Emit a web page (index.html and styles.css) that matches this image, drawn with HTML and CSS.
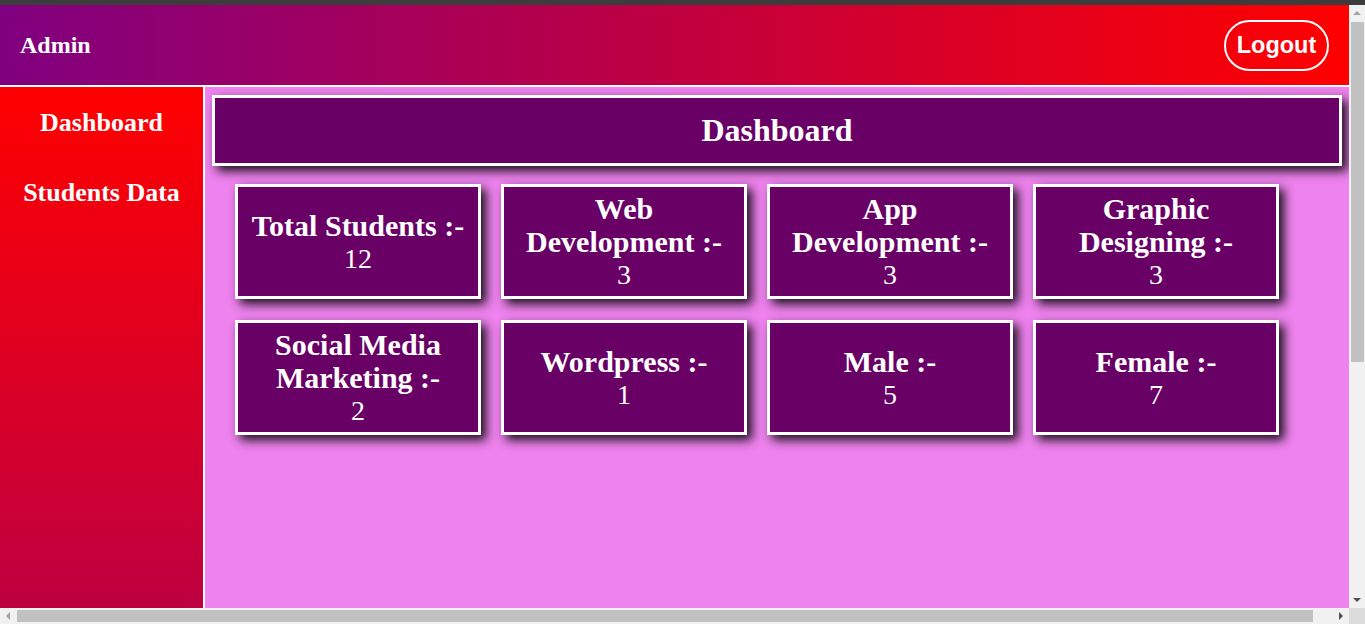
FILE: index.html
```html
<!DOCTYPE html>
<html lang="en">
<head>
<meta charset="utf-8">
<title>Admin Dashboard</title>
<link rel="stylesheet" href="styles.css">
</head>
<body>
<div class="chrome-strip"></div>
<div class="window">
  <div class="page">
    <header class="topbar">
      <h2 class="brand">Admin</h2>
      <button class="logout">Logout</button>
    </header>
    <div class="layout">
      <nav class="sidebar">
        <a class="nav-item" href="#">Dashboard</a>
        <a class="nav-item" href="#">Students Data</a>
      </nav>
      <main class="content">
        <div class="title-box"><h1>Dashboard</h1></div>
        <div class="cards">
          <div class="card"><h2>Total Students :-</h2><p>12</p></div>
          <div class="card"><h2>Web Development :-</h2><p>3</p></div>
          <div class="card"><h2>App Development :-</h2><p>3</p></div>
          <div class="card"><h2>Graphic Designing :-</h2><p>3</p></div>
          <div class="card"><h2>Social Media Marketing :-</h2><p>2</p></div>
          <div class="card"><h2>Wordpress :-</h2><p>1</p></div>
          <div class="card"><h2>Male :-</h2><p>5</p></div>
          <div class="card"><h2>Female :-</h2><p>7</p></div>
        </div>
      </main>
    </div>
  </div>
  <div class="vscroll" aria-hidden="true">
    <div class="sb-btn"><span class="arrow up"></span></div>
    <div class="vtrack"><div class="vthumb"></div></div>
    <div class="sb-btn"><span class="arrow down"></span></div>
  </div>
  <div class="hscroll" aria-hidden="true">
    <div class="sb-btn"><span class="arrow left"></span></div>
    <div class="htrack"><div class="hthumb"></div></div>
    <div class="sb-btn"><span class="arrow right"></span></div>
  </div>
  <div class="corner" aria-hidden="true"></div>
</div>
</body>
</html>
```
FILE: styles.css
```css
html, body {
  margin: 0;
  padding: 0;
  height: 100%;
  overflow: hidden;
}
body {
  background: #3c3c3c;
  font-family: "Liberation Serif", "Times New Roman", serif;
  color: #fff;
}
.chrome-strip {
  height: 5px;
  background: #3c3c3c;
}
.window {
  display: grid;
  grid-template-columns: 1fr 16px;
  grid-template-rows: 603px 16px;
  height: 619px;
}
.page {
  overflow: hidden;
  background: #ee82ee;
  min-width: 0;
}

/* drawn scrollbars */
.vscroll {
  display: flex;
  flex-direction: column;
  background: #f1f1f1;
}
.hscroll {
  display: flex;
  background: #f1f1f1;
}
.sb-btn {
  width: 16px;
  height: 16px;
  flex: none;
  display: flex;
  align-items: center;
  justify-content: center;
}
.vtrack {
  flex: 1;
  padding: 1px 1px 0 2px;
}
.vthumb {
  height: 340px;
  background: #c1c1c1;
}
.htrack {
  flex: 1;
  padding: 2px 0 2px 1px;
}
.hthumb {
  width: 1296px;
  height: 12px;
  background: #c1c1c1;
}
.corner {
  background: #dcdcdc;
}
.arrow {
  width: 0;
  height: 0;
  border-style: solid;
}
.arrow.up {
  border-width: 0 4px 4px 4px;
  border-color: transparent transparent #a3a3a3 transparent;
}
.arrow.down {
  border-width: 4px 4px 0 4px;
  border-color: #505050 transparent transparent transparent;
}
.arrow.left {
  border-width: 4px 4px 4px 0;
  border-color: transparent #a3a3a3 transparent transparent;
}
.arrow.right {
  border-width: 4px 0 4px 4px;
  border-color: transparent transparent transparent #505050;
}

.topbar {
  height: 80px;
  border-bottom: 2px solid #fff;
  background: linear-gradient(to right, #800080, #ff0000);
  display: flex;
  align-items: center;
  justify-content: space-between;
  padding: 0 20px;
}
.brand {
  margin: 0;
  font-size: 24px;
  font-weight: bold;
}
.logout {
  font-family: "Liberation Sans", Arial, sans-serif;
  font-weight: bold;
  font-size: 23.5px;
  color: #fff;
  background: transparent;
  border: 2px solid #fff;
  border-radius: 26px;
  width: 105px;
  height: 51px;
  padding: 0;
}
.layout {
  display: flex;
  width: 1371px;
  min-height: 1133px;
}
.sidebar {
  width: 205px;
  height: 1016px;
  flex: none;
  box-sizing: border-box;
  border-right: 2px solid #fff;
  background: linear-gradient(to bottom, #ff0000, #800080);
  display: flex;
  flex-direction: column;
  align-items: center;
  padding-top: 21px;
  gap: 40px;
}
.nav-item {
  color: #fff;
  text-decoration: none;
  font-size: 26px;
  font-weight: bold;
  line-height: 30px;
}
.content {
  flex: 1;
  padding: 8px 29px 0 7px;
  background: #ee82ee;
}
.title-box {
  height: 65px;
  border: 3px solid #fff;
  background: #690066;
  box-shadow: 5px 5px 10px rgba(0, 0, 0, 0.9);
  display: flex;
  align-items: center;
  justify-content: center;
}
.title-box h1 {
  margin: 0;
  font-size: 32px;
  font-weight: bold;
}
.cards {
  display: flex;
  flex-wrap: wrap;
  gap: 21px 20px;
  padding: 18px 0 0 23px;
}
.card {
  width: 220px;
  height: 109px;
  padding: 0 10px;
  border: 3px solid #fff;
  background: #690066;
  box-shadow: 5px 5px 10px rgba(0, 0, 0, 0.9);
  display: flex;
  flex-direction: column;
  align-items: center;
  justify-content: center;
  text-align: center;
}
.card h2 {
  margin: 0;
  font-size: 30px;
  line-height: 33px;
  font-weight: bold;
}
.card p {
  margin: 0;
  font-size: 28px;
  line-height: 33px;
}
```
